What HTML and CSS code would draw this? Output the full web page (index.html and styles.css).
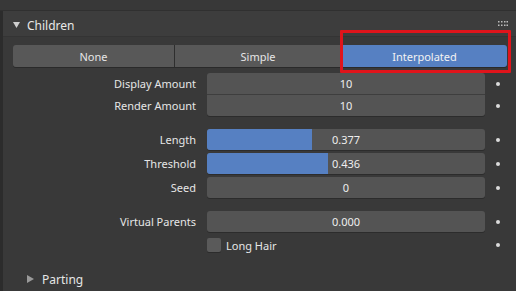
FILE: index.html
```html
<!DOCTYPE html>
<html>
<head>
<meta charset="utf-8">
<link rel="stylesheet" href="styles.css">
</head>
<body>
<div class="page">
  <div class="topband"></div>
  <div class="panel">
    <div class="header">
      <svg class="tri-down" width="7" height="6" viewBox="0 0 7 6"><polygon points="0,0 7,0 3.5,6" fill="#cfcfcf"/></svg>
      <span class="title">Children</span>
      <svg class="grip" width="10" height="6" viewBox="0 0 10 6">
        <g fill="#bdbdbd">
          <rect x="0" y="0" width="1.5" height="1.5"/><rect x="3" y="0" width="1.5" height="1.5"/><rect x="6" y="0" width="1.5" height="1.5"/><rect x="8.5" y="0" width="1.5" height="1.5"/>
          <rect x="0" y="3.5" width="1.5" height="1.5"/><rect x="3" y="3.5" width="1.5" height="1.5"/><rect x="6" y="3.5" width="1.5" height="1.5"/><rect x="8.5" y="3.5" width="1.5" height="1.5"/>
        </g>
      </svg>
    </div>
    <div class="body">
      <div class="segments">
        <div class="seg seg-first">None</div>
        <div class="seg">Simple</div>
        <div class="seg seg-active">Interpolated</div>
      </div>

      <div class="group group-joined">
        <div class="row">
          <div class="label">Display Amount</div>
          <div class="field field-top">10</div>
          <div class="dot"></div>
        </div>
        <div class="row">
          <div class="label">Render Amount</div>
          <div class="field field-bottom">10</div>
          <div class="dot"></div>
        </div>
      </div>

      <div class="group group-gap">
        <div class="row">
          <div class="label">Length</div>
          <div class="field slider"><div class="fill" style="width:37.7%"></div><span class="val">0.377</span></div>
          <div class="dot"></div>
        </div>
        <div class="row">
          <div class="label">Threshold</div>
          <div class="field slider"><div class="fill" style="width:43.6%"></div><span class="val">0.436</span></div>
          <div class="dot"></div>
        </div>
        <div class="row">
          <div class="label">Seed</div>
          <div class="field">0</div>
          <div class="dot"></div>
        </div>
      </div>

      <div class="group group-vp">
        <div class="row">
          <div class="label">Virtual Parents</div>
          <div class="field">0.000</div>
          <div class="dot"></div>
        </div>
        <div class="row row-check">
          <div class="label"></div>
          <div class="check"><span class="box"></span><span class="check-label">Long Hair</span></div>
          <div class="dot"></div>
        </div>
      </div>

      <div class="subpanel">
        <svg class="tri-right" width="7" height="8" viewBox="0 0 7 8"><polygon points="0,0 7,4 0,8" fill="#9a9a9a"/></svg>
        <span class="sub-title">Parting</span>
      </div>
    </div>
  </div>
  <div class="highlight"></div>
</div>
</body>
</html>
```

FILE: styles.css
```css
html, body {
  margin: 0;
  padding: 0;
  background: #393939;
}
.page {
  position: relative;
  width: 516px;
  height: 291px;
  overflow: hidden;
  background: #393939;
  font-family: "Noto Sans", "DejaVu Sans", sans-serif;
  font-size: 11px;
  color: #e6e6e6;
}
.topband {
  height: 10px;
  background: #383838;
  border-bottom: 1px solid #303030;
}
.panel {
  border-left: 3px solid #2c2c2c;
  height: 280px;
}
.header {
  height: 26px;
  background: #3d3d3d;
  display: flex;
  align-items: center;
  padding-left: 10px;
  padding-right: 8px;
  border-bottom: 1px solid #343434;
  box-sizing: border-box;
  padding-top: 2px;
}
.tri-down {
  margin-right: 7px;
}
.title {
  font-size: 12px;
  color: #e8e8e8;
  flex: 1;
  margin-top: 2px;
}
.grip {
  margin-top: -2px;
}
.body {
  background: #393939;
  padding: 8px 9px 0 10px;
}
.segments {
  display: flex;
  height: 22px;
  border-radius: 3px;
  box-shadow: 0 1px 0 #2a2a2a;
}
.seg {
  display: flex;
  align-items: center;
  justify-content: center;
  background: #585858;
  color: #e6e6e6;
  border-right: 1px solid #2e2e2e;
}
.seg-first {
  width: 161px;
  border-radius: 3px 0 0 3px;
}
.seg:nth-child(2) {
  width: 166px;
}
.seg-active {
  flex: 1;
  background: #5680c2;
  border-right: none;
  border-radius: 0 3px 3px 0;
  color: #f2f2f2;
}
.group {
  display: flex;
  flex-direction: column;
  gap: 3px;
}
.group-joined {
  margin-top: 6px;
  gap: 1px;
}
.group-gap {
  margin-top: 13px;
}
.group-vp {
  margin-top: 13px;
  gap: 4px;
}
.row {
  display: grid;
  grid-template-columns: 183px 278px 4px;
  column-gap: 11px;
  align-items: center;
  height: 21px;
}
.label {
  text-align: right;
  color: #e6e6e6;
}
.field {
  position: relative;
  height: 21px;
  background: #545454;
  border-radius: 3px;
  box-shadow: 0 1px 0 #2c2c2c;
  display: flex;
  align-items: center;
  justify-content: center;
  overflow: hidden;
  color: #eeeeee;
}
.field-top {
  border-radius: 3px 3px 0 0;
  box-shadow: 0 1px 0 #3e3e3e;
}
.field-bottom {
  border-radius: 0 0 3px 3px;
}
.slider .fill {
  position: absolute;
  left: 0;
  top: 0;
  bottom: 0;
  background: #5680c2;
}
.slider .val {
  position: relative;
}
.dot {
  width: 4px;
  height: 4px;
  border-radius: 50%;
  background: #dcdcdc;
}
.row-check {
  height: 18px;
}
.check {
  display: flex;
  align-items: center;
  gap: 5px;
}
.box {
  width: 14px;
  height: 14px;
  border-radius: 2px;
  background: #5a5a5a;
  box-shadow: 0 1px 0 #2c2c2c;
}
.subpanel {
  display: flex;
  align-items: center;
  margin-top: 18px;
  padding-left: 14px;
  height: 14px;
}
.tri-right {
  margin-right: 8px;
}
.sub-title {
  font-size: 12px;
  color: #e6e6e6;
}
.highlight {
  position: absolute;
  left: 340px;
  top: 30px;
  width: 165px;
  height: 37px;
  border: 3px solid #e0141b;
  border-radius: 1px;
}
```
